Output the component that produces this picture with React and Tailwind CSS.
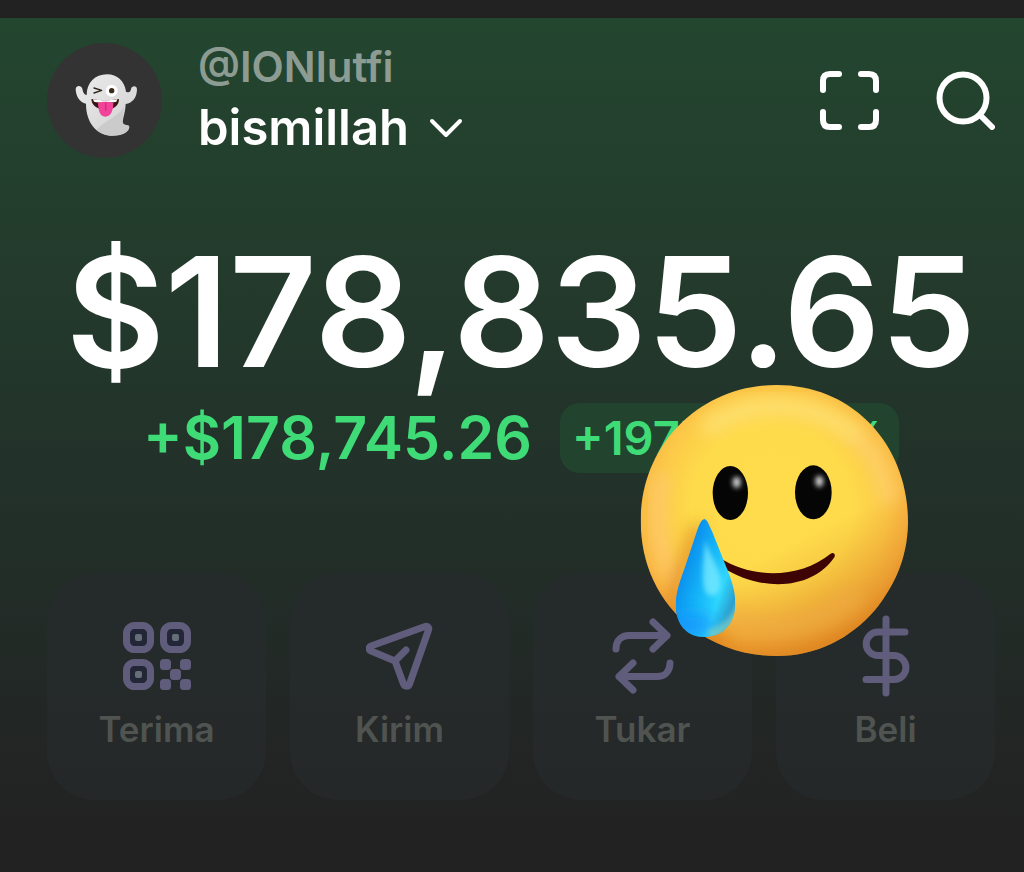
import React from 'react';

const GhostAvatar = () => (
  <svg viewBox="51 126 345 345" className="size-full" aria-hidden="true">
    <defs>
      <linearGradient id="ghost" x1="0" y1="0" x2="1" y2="1">
        <stop offset="0" stopColor="#ececec" />
        <stop offset="0.65" stopColor="#dadada" />
        <stop offset="1" stopColor="#c2c2c2" />
      </linearGradient>
    </defs>
    <path
      d="M170 282 C170 245 195 220 231 220 C262 220 284 240 288 272 C298 276 302 272 303 264 C305 254 321 252 321 266 C320 290 308 305 287 309 C286 334 279 350 278 364 C280 375 297 370 298 378 C297 396 272 405 245 404 C200 402 168 366 168 308 C148 304 138 286 137 264 C138 252 154 252 157 263 C159 273 162 281 170 282 Z"
      fill="url(#ghost)"
    />
    <path d="M200 386 C222 360 262 350 282 318 C280 340 277 352 278 364 C280 375 297 370 298 378 C294 398 264 405 240 404 C224 402 210 396 200 386 Z" fill="#cbcbcb" />
    <circle cx="245" cy="269" r="18" fill="#fff" />
    <circle cx="245" cy="269" r="8" fill="#3a2a1a" />
    <path d="M192 261 L215 268 L192 276" fill="none" stroke="#2e261c" strokeWidth="4" strokeLinecap="round" strokeLinejoin="round" />
    <path d="M184 294 C208 299 242 299 267 294 C267 314 252 326 226 326 C200 326 185 312 184 294 Z" fill="#3a1613" />
    <path d="M189 295 C210 299 242 299 262 295 L259 302 C240 306 210 306 192 302 Z" fill="#fff" />
    <path d="M204 306 C215 301 237 301 250 306 C250 325 244 347 226 347 C208 347 205 325 204 306 Z" fill="#f2439a" />
    <path d="M227 306 L227 328" stroke="#d42a7c" strokeWidth="4" strokeLinecap="round" />
  </svg>
);

const TearFace = () => (
  <svg viewBox="0 0 900 900" className="size-full" role="img" aria-label="Smiling face with tear">
    <defs>
      <radialGradient id="face" cx="455" cy="410" r="440" gradientUnits="userSpaceOnUse">
        <stop offset="0" stopColor="#fedc4b" />
        <stop offset="0.55" stopColor="#fedb4b" />
        <stop offset="0.78" stopColor="#fcca48" />
        <stop offset="0.92" stopColor="#f9b743" />
        <stop offset="1" stopColor="#f2a233" />
      </radialGradient>
      <linearGradient id="faceShade" x1="380" y1="200" x2="700" y2="820" gradientUnits="userSpaceOnUse">
        <stop offset="0.5" stopColor="#d97a1c" stopOpacity="0" />
        <stop offset="1" stopColor="#cf7214" stopOpacity="0.6" />
      </linearGradient>
      <linearGradient id="tear" x1="175" y1="620" x2="345" y2="680" gradientUnits="userSpaceOnUse">
        <stop offset="0" stopColor="#0a8cec" />
        <stop offset="0.4" stopColor="#14b4f8" />
        <stop offset="0.75" stopColor="#2ed6fd" />
        <stop offset="1" stopColor="#2b9fd0" />
      </linearGradient>
      <filter id="soft" x="-50%" y="-50%" width="200%" height="200%">
        <feGaussianBlur stdDeviation="24" />
      </filter>
      <filter id="softSmall" x="-60%" y="-60%" width="220%" height="220%">
        <feGaussianBlur stdDeviation="8" />
      </filter>
      <clipPath id="faceClip">
        <path d="M470 45 C700 45 864 225 864 458 C862 570 820 650 765 720 C690 806 590 858 470 858 C370 858 290 828 215 775 C115 695 62 585 62 450 C62 225 240 45 470 45 Z" />
      </clipPath>
      <clipPath id="tearClip">
        <path d="M253 447 C262 449 266 462 276 484 L324 604 C336 636 346 664 346 700 C346 762 308 801 253 801 C200 801 167 762 167 705 C167 665 182 628 194 594 L232 480 C239 460 245 449 253 447 Z" />
      </clipPath>
    </defs>
    <g clipPath="url(#faceClip)">
      <rect width="900" height="900" fill="url(#face)" />
      <rect width="900" height="900" fill="url(#faceShade)" />
      <path d="M270 170 C390 85 560 85 700 190" fill="none" stroke="#fee782" strokeWidth="56" strokeLinecap="round" opacity="0.65" filter="url(#soft)" />
      <path d="M125 330 C95 460 125 570 170 630" fill="none" stroke="#ffc87a" strokeWidth="44" strokeLinecap="round" opacity="0.7" filter="url(#soft)" />
      <path d="M715 210 C760 240 790 310 805 380" fill="none" stroke="#ffd488" strokeWidth="50" strokeLinecap="round" opacity="0.5" filter="url(#soft)" />
      <path d="M340 750 C470 790 610 760 700 680" fill="none" stroke="#efac44" strokeWidth="60" strokeLinecap="round" opacity="0.6" filter="url(#soft)" />
      <path d="M235 465 C215 560 165 630 160 700 C170 760 240 820 320 810" fill="none" stroke="#d97a16" strokeWidth="34" opacity="0.8" filter="url(#soft)" />
    </g>
    <ellipse cx="331" cy="369" rx="53" ry="81" fill="#050505" />
    <ellipse cx="580" cy="367" rx="55" ry="81" fill="#050505" />
    <ellipse cx="350" cy="337" rx="12" ry="17" fill="#d6d6d6" filter="url(#softSmall)" />
    <ellipse cx="598" cy="334" rx="12" ry="17" fill="#d6d6d6" filter="url(#softSmall)" />
    <path d="M300 564 C400 628 540 625 632 551 C640 545 648 552 643 562 C585 650 440 675 306 592 Z" fill="#3e0303" />
    <g clipPath="url(#tearClip)">
      <rect x="150" y="430" width="210" height="380" fill="url(#tear)" />
      <ellipse cx="215" cy="765" rx="70" ry="40" fill="#1494fb" opacity="0.8" filter="url(#soft)" />
      <path d="M356 680 C345 735 310 765 262 780 L270 815 L340 820 L380 740 Z" fill="#7fd0c4" opacity="0.7" filter="url(#softSmall)" />
      <path d="M256 510 C252 570 240 640 260 670 C285 692 308 662 302 625 C292 585 270 555 256 510 Z" fill="#7cecff" opacity="0.75" filter="url(#softSmall)" />
    </g>
  </svg>
);

const ReceiveIcon = () => (
  <svg viewBox="0 0 68 68" className="size-[68px]" fill="currentColor" aria-hidden="true">
    {[[0, 0], [37, 0], [0, 37]].map(([x, y]) => (
      <g key={`${x}-${y}`}>
        <rect x={x + 3.5} y={y + 3.5} width="24" height="24" rx="8" fill="#232637" stroke="currentColor" strokeWidth="7" />
        <rect x={x + 12} y={y + 12} width="7" height="7" rx="2" fill="#646f78" />
      </g>
    ))}
    {[[37, 37], [57, 37], [47, 47], [37, 57], [57, 57]].map(([x, y]) => (
      <rect key={`${x}-${y}`} x={x} y={y} width="11" height="11" rx="3.5" />
    ))}
  </svg>
);

const SendIcon = () => (
  <svg viewBox="0 0 68 68" className="size-[68px]" fill="none" stroke="currentColor" strokeWidth="7" strokeLinecap="round" strokeLinejoin="round" aria-hidden="true">
    <path d="M5 24 L59 4.500 C61.500 3.500 63.500 5.500 62.500 8 L43.500 62 C42.500 65 38.500 65 37.500 62 L29 39 L5 29 C2.500 28 2.500 25 5 24 Z M29 39 L40 28" />
  </svg>
);

const SwapIcon = () => (
  <svg viewBox="0 0 62 76" className="h-[76px] w-[62px]" fill="none" stroke="currentColor" strokeWidth="7" strokeLinecap="round" strokeLinejoin="round" aria-hidden="true">
    <path d="M4 31 C4 22 10 17.500 17 17.500 L55 17.500 M41 4 L55 17.500 L41 31" />
    <path d="M58 45 C58 54 52 58.500 45 58.500 L7 58.500 M21 45 L7 58.500 L21 72" />
  </svg>
);

const BuyIcon = () => (
  <svg viewBox="0 0 48 82" className="h-[82px] w-12" fill="none" stroke="currentColor" strokeWidth="7" strokeLinecap="round" aria-hidden="true">
    <path d="M24 4 L24 78" />
    <path d="M43 17 L16 17 A11.800 11.800 0 0 0 16 40.600 L32 40.600 A11.800 11.800 0 0 1 32 64.500 L4 64.500" />
  </svg>
);

const actions = [
  { label: 'Terima', icon: <ReceiveIcon /> },
  { label: 'Kirim', icon: <SendIcon /> },
  { label: 'Tukar', icon: <SwapIcon /> },
  { label: 'Beli', icon: <BuyIcon /> },
];

const App = () => {
  return (
    <div className="min-h-screen bg-[#222222] pt-[18px] font-['Inter',sans-serif] text-white">
      <main className="min-h-[854px] bg-linear-to-b from-[#23462f] via-[#222f29] via-60% to-[#222222] to-95% pt-[21px] pr-[29px] pl-[47px]">
        <header className="flex items-center justify-between">
          <div className="flex items-center gap-9">
            <div className="size-[115px] overflow-hidden rounded-full bg-[#333333]">
              <GhostAvatar />
            </div>
            <div>
              <p className="text-[42px] leading-[56px] font-semibold text-[#8d9c93]">@IONlutfi</p>
              <button type="button" className="flex items-center gap-5 text-[49px] leading-[66px] font-semibold">
                bismillah
                <svg viewBox="0 0 34 20" className="h-5 w-[34px]" fill="none" stroke="currentColor" strokeWidth="4" strokeLinecap="round" strokeLinejoin="round" aria-hidden="true">
                  <path d="M3 3 L17 17 L31 3" />
                </svg>
              </button>
            </div>
          </div>
          <div className="flex items-center gap-14">
            <button type="button" aria-label="Scan">
              <svg viewBox="0 0 60 60" className="size-[60px]" fill="none" stroke="currentColor" strokeWidth="6" strokeLinecap="round" aria-hidden="true">
                <path d="M4 20 L4 11 Q4 4 11 4 L20 4 M42 4 L50 4 Q57 4 57 11 L57 20 M57 42 L57 50 Q57 57 50 57 L42 57 M20 57 L11 57 Q4 57 4 50 L4 42" />
              </svg>
            </button>
            <button type="button" aria-label="Search">
              <svg viewBox="0 0 60 60" className="size-[60px]" fill="none" stroke="currentColor" strokeWidth="6" strokeLinecap="round" aria-hidden="true">
                <circle cx="28" cy="28" r="23.500" />
                <path d="M45 45 L57 57" />
              </svg>
            </button>
          </div>
        </header>

        <section className="relative flex flex-col items-center pt-[60px]">
          <h1 className="text-[152px] leading-[182px] font-semibold whitespace-nowrap">$178,835.65</h1>
          <div className="flex items-center gap-7 whitespace-nowrap text-[#3fdb77]">
            <span className="text-[59px] leading-[70px] font-semibold">+$178,745.26</span>
            <span className="rounded-[20px] bg-[#22442f] px-3 text-[47px] leading-[70px] font-semibold">+197748.93%</span>
          </div>
          <div className="absolute top-[209px] right-[75px] size-[300px]">
            <TearFace />
          </div>
        </section>

        <nav className="mt-[100px] grid grid-cols-4 gap-6">
          {actions.map(({ label, icon }) => (
            <button key={label} type="button" className="flex h-[227px] flex-col items-center rounded-[48px] bg-[#272b2c]/70 pt-[40px]">
              <span className="flex h-[86px] items-center text-[#5f5c7c]">{icon}</span>
              <span className="mt-2 text-[35px] leading-[44px] font-semibold text-[#4f5451]">{label}</span>
            </button>
          ))}
        </nav>
      </main>
    </div>
  );
};

export default App;
